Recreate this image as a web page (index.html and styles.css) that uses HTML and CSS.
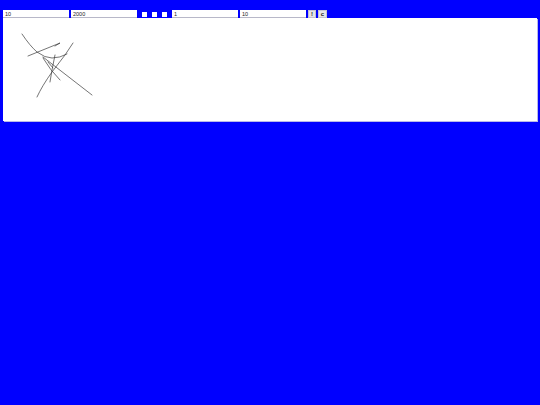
FILE: index.html
```html
<!DOCTYPE html>
<html>
<head>
<meta charset="utf-8">
<link rel="stylesheet" href="styles.css">
</head>
<body>
<div class="toolbar">
  <input class="field" type="text" value="10">
  <input class="field" type="text" value="2000">
  <span class="checks">
    <span class="check"></span>
    <span class="check"></span>
    <span class="check"></span>
  </span>
  <input class="field" type="text" value="1">
  <input class="field" type="text" value="10">
  <span class="btn">!</span>
  <span class="btn btn-wide">c</span>
</div>
<div class="canvas">
  <svg class="scribble" width="533" height="103" viewBox="3 18 533 103">
    <g fill="none" stroke="#3a3a3a" stroke-width="0.7" stroke-linecap="round" stroke-linejoin="round">
      <path d="M22 34 Q30 46 37 52 Q45 58 52 58 Q60 58 67 54"/>
      <path d="M28 56 L60 43 L55 46"/>
      <path d="M73 43 L65 55 L52 72 Q42 86 37 97"/>
      <path d="M43 57 L52 64 L92 95"/>
      <path d="M55 55 L52 70 L50 82"/>
      <path d="M43 58 Q50 70 60 80"/>
      <path d="M48 62 L53 68"/>
    </g>
  </svg>
</div>
</body>
</html>
```

FILE: styles.css
```css
html, body {
  margin: 0;
  padding: 0;
  background: #0000ff;
  width: 540px;
  height: 405px;
  overflow: hidden;
  font-family: "Liberation Sans", Arial, sans-serif;
}

.toolbar {
  display: flex;
  align-items: center;
  padding: 10px 0 0 3px;
  height: 8px;
}

.field {
  box-sizing: border-box;
  width: 66px;
  height: 8px;
  margin: 0 2px 0 0;
  padding: 0 2px;
  border: none;
  border-bottom: 1px solid #b8b8c8;
  background: #ffffff;
  color: #222;
  font-family: "Liberation Sans", Arial, sans-serif;
  font-size: 5.5px;
  line-height: 7px;
  outline: none;
}

.checks {
  display: flex;
  gap: 5px;
  margin: 0 5px 0 3px;
}

.check {
  display: block;
  width: 5px;
  height: 5px;
  background: #ffffff;
}

.btn {
  box-sizing: border-box;
  display: flex;
  align-items: center;
  justify-content: center;
  height: 8px;
  width: 8px;
  margin: 0 2px 0 0;
  border: 1px solid #c4c4d0;
  background: #e4e4e8;
  color: #222;
  font-size: 6px;
  font-weight: bold;
  line-height: 6px;
}

.btn-wide {
  width: 9px;
}

.canvas {
  margin: 0 0 0 3px;
  width: 534px;
  height: 103px;
  background: #ffffff;
  box-shadow: 1px 1px 0 #b8b8e8;
}

.scribble {
  display: block;
}
```
